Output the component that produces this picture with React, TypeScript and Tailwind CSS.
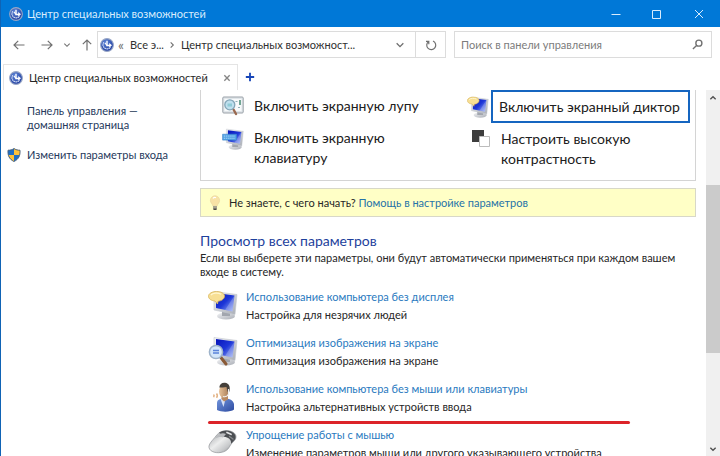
import React from "react";

function EaseOfAccessIcon({ className }: { className: string }) {
  return (
    <svg viewBox="0 0 16 16" className={className} aria-hidden="true">
      <defs>
        <radialGradient id="eoa" cx="40%" cy="30%" r="75%">
          <stop offset="0" stopColor="#5c83d6" />
          <stop offset="1" stopColor="#1f3b9c" />
        </radialGradient>
      </defs>
      <circle cx="8" cy="8" r="7.3" fill="url(#eoa)" stroke="#9aa8c6" strokeWidth="1.2" />
      <path d="M4.200 5A4.700 4.700 0 1 0 12.200 10.200" fill="none" stroke="#e6eefc" strokeWidth="1.300" strokeDasharray="1.600 .7" />
      <path d="M8 3v5.500h3.500" fill="none" stroke="#fff" strokeWidth="1.600" />
      <path d="m10.500 5.800 3.200 2.600-3.200 2.600z" fill="#fff" />
      <path d="M5.600 5.500 8 8.500" stroke="#fff" strokeWidth="1.200" />
    </svg>
  );
}

function Monitor() {
  return (
    <>
      <defs>
        <linearGradient id="screen" x1="0" y1="0" x2="1" y2="1">
          <stop offset="0" stopColor="#0714b8" />
          <stop offset=".5" stopColor="#1d36d8" />
          <stop offset="1" stopColor="#a9bdf6" />
        </linearGradient>
        <linearGradient id="metal" x1="0" y1="0" x2="1" y2="1">
          <stop offset="0" stopColor="#f4f5f7" />
          <stop offset="1" stopColor="#a8acb4" />
        </linearGradient>
      </defs>
      <ellipse cx="18" cy="26" rx="9" ry="3.600" fill="url(#metal)" />
      <path d="m14 20 8 2v4h-8z" fill="#a2a6ae" />
      <path d="M6 1.500 29 4.500 27 24.500 6 20z" fill="url(#metal)" stroke="#c3c7cf" strokeWidth=".6" />
      <path d="M8 3 26.500 5.500 24.500 21.500 8 18z" fill="url(#screen)" />
      <path d="M26.500 5.500 24.500 21.500 17 20z" fill="#fff" opacity=".22" />
    </>
  );
}

function NarratorIcon({ className }: { className: string }) {
  return (
    <svg viewBox="0 0 30 30" className={className} aria-hidden="true">
      <Monitor />
      <path d="M8.500 1.500c4.500 0 8 1.800 8 4.600S13.500 11 10 11.200L9.500 14 7 11C3.200 10.700.5 8.800.5 6.200s3.500-4.700 8-4.700z" fill="#f7df94" stroke="#d9b65c" strokeWidth=".8" />
      <path d="M3 5c1.500-2 7-2.500 10-.8" fill="none" stroke="#fff6d0" strokeWidth="1.300" />
    </svg>
  );
}

function KeyboardIcon({ className }: { className: string }) {
  return (
    <svg viewBox="0 0 30 30" className={className} aria-hidden="true">
      <Monitor />
      <path d="M.8 8.500h19v8H.8z" fill="#54a3e4" stroke="#3b83c9" strokeWidth=".8" />
      <path d="M2.500 11h15.500M2.500 14h15.500" stroke="#b5dcfb" strokeWidth="1.200" strokeDasharray="1.600 1" />
    </svg>
  );
}

function DisplayIcon({ className }: { className: string }) {
  return (
    <svg viewBox="0 0 30 30" className={className} aria-hidden="true">
      <Monitor />
      <path d="m12.500 21 5.500 7" stroke="#8a5a36" strokeWidth="3" strokeLinecap="round" />
      <circle cx="8" cy="16" r="6.600" fill="#d3e6fa" stroke="#9eb3ca" strokeWidth="1.500" />
      <path d="M5 14.500h6M5 17h6" stroke="#5b84da" strokeWidth="1.500" />
    </svg>
  );
}

function MagnifierIcon({ className }: { className: string }) {
  return (
    <svg viewBox="0 0 22 20" className={className} aria-hidden="true">
      <rect x=".8" y="1" width="20.400" height="16" rx="1" fill="#e1e6ea" stroke="#9aa1a8" strokeWidth="1" />
      <rect x="2.500" y="3" width="17" height="12" fill="#f8fafb" />
      <path d="M18 4v5" stroke="#27795c" strokeWidth="1.300" />
      <path d="M13.500 5.500h2M16 11.500h2" stroke="#93b3ba" />
      <path d="m11.500 13.500 2.500 4.500" stroke="#9b6a50" strokeWidth="2.400" strokeLinecap="round" />
      <circle cx="7.800" cy="8.800" r="5" fill="#bfe0ee" stroke="#84a6b8" strokeWidth="1.300" />
      <path d="M5.500 7.500h4.500v3H5.500z" fill="#8fcbd6" />
    </svg>
  );
}

function PersonIcon({ className }: { className: string }) {
  return (
    <svg viewBox="0 0 30 30" className={className} aria-hidden="true">
      <defs>
        <linearGradient id="shirt" x1="0" y1="0" x2="1" y2="1">
          <stop offset="0" stopColor="#7396dd" />
          <stop offset="1" stopColor="#2c4aa0" />
        </linearGradient>
        <linearGradient id="skin" x1="0" y1="0" x2="1" y2="0">
          <stop offset="0" stopColor="#e8c39a" />
          <stop offset="1" stopColor="#a87c56" />
        </linearGradient>
      </defs>
      <path d="M9 28V21c0-3 2.500-4.500 7-4.500s9 1 10 5.500v5.500c-3 2.500-12 3-17 .5z" fill="url(#shirt)" />
      <path d="m12.500 17 3 8 2-8z" fill="#d5dff5" />
      <path d="M13.500 13h6.500v4.500l-4 2-2.500-2.500z" fill="#b98a62" />
      <ellipse cx="16" cy="9.500" rx="5" ry="6.300" fill="url(#skin)" />
      <path d="M11.300 5.500C11.500 2 14 .5 17 .8c4 .4 6 4.200 4 9.700l-1.500-1L18.500 5c-2.500.7-5 .2-7.200.5z" fill="#45403a" />
      <path d="M20.500 7v5c-.5 2-3 3-5.500 2.500" fill="none" stroke="#f1f1f1" strokeWidth="1.100" />
      <path d="M8.500 11.500c1 1.300 1 3 0 4.300M5.500 12.500c.8.800.8 1.800 0 2.600" fill="none" stroke="#e3b385" strokeWidth="1.500" />
    </svg>
  );
}

function MouseIcon({ className }: { className: string }) {
  return (
    <svg viewBox="0 0 30 30" className={className} aria-hidden="true">
      <defs>
        <linearGradient id="mouse" x1="0" y1="0" x2="1" y2="1">
          <stop offset="0" stopColor="#999ca0" />
          <stop offset=".45" stopColor="#eceded" />
          <stop offset=".7" stopColor="#c6c8ca" />
          <stop offset="1" stopColor="#74777b" />
        </linearGradient>
      </defs>
      <path d="M8 8C11 3.500 17 1.800 22 3s7 4.500 5.500 8c-1 2.200-3.500 3.500-5 6-1.500 2.800-3 5.500-7 6.800C9 26 1.800 24 1 19.500.4 16 4.500 12.500 8 8z" fill="url(#mouse)" stroke="#8f9296" strokeWidth=".7" />
      <path d="M11 4.800C15 2 19 2 22.500 3.200c4.500 1.600 6.300 4.800 4.500 8.300l-4 4.300c.5-3-.8-5.300-4-6.300-2-.6-4-.8-5-2z" fill="#4b4e52" />
      <path d="M9 7.500c3-2.300 6-2.600 9-1.600l-3 3.500c-2.500-.8-5-.5-8 1.200z" fill="#b9bbbe" />
      <path d="m19 4.500 4 1.800" stroke="#e3e4e6" strokeWidth="1.700" strokeLinecap="round" />
      <path d="m21.500 8.500 3.500 2.500" stroke="#85888c" strokeWidth="1.400" strokeLinecap="round" />
    </svg>
  );
}

function ContrastIcon() {
  return (
    <svg viewBox="0 0 20 20" className="h-5 w-5" aria-hidden="true">
      <path d="M1 1h12v12H1z" fill="#3d3d3d" />
      <path d="M8.500 7.500h10v10h-10z" fill="#fff" stroke="#bcbcbc" />
    </svg>
  );
}

function ShieldIcon() {
  return (
    <svg viewBox="0 0 14 14" className="h-[14px] w-[14px]" aria-hidden="true">
      <path d="M7 .5C5.200 1.800 3 2.300 1 2.200c-.4 5.300 1.200 9 6 11.300 4.800-2.300 6.400-6 6-11.300-2 .1-4.200-.4-6-1.700z" fill="#1e6fc4" />
      <path d="M7 .5c1.800 1.300 4 1.800 6 1.700.1 1.700 0 3.300-.5 4.800H7zM1.500 7H7v6.500C4.200 12.200 2.300 9.800 1.500 7z" fill="#fcc23a" />
      <path d="M7 .5C5.200 1.800 3 2.300 1 2.200c-.4 5.300 1.200 9 6 11.300 4.800-2.300 6.400-6 6-11.300-2 .1-4.200-.4-6-1.700z" fill="none" stroke="#4c6078" strokeWidth=".9" />
    </svg>
  );
}

function BulbIcon() {
  return (
    <svg viewBox="0 0 12 16" className="h-4 w-3" aria-hidden="true">
      <path d="M6 .8a4.600 4.600 0 0 0-4.600 4.600c0 2.400 2 3.300 2.400 5.400h4.400c.4-2.100 2.400-3 2.400-5.400A4.600 4.600 0 0 0 6 .8z" fill="#f8e2a6" stroke="#ead7a0" strokeWidth=".7" />
      <path d="M4 3.500c.7-1 2-1.300 3-.8" fill="none" stroke="#fff" strokeWidth="1.200" />
      <path d="M4 11h4v2.500L7 15H5l-1-1.500z" fill="#a8a390" />
      <path d="M4.500 13.500h3V15h-3z" fill="#4d4a45" />
    </svg>
  );
}

function Stroke({ d, className, width = 1.2 }: { d: string; className: string; width?: number }) {
  return (
    <svg viewBox="0 0 12 12" className={className} fill="none" stroke="currentColor" strokeWidth={width} aria-hidden="true">
      <path d={d} />
    </svg>
  );
}

const LEFT = "M11.500 6H1M5.200 1.800 1 6l4.200 4.200";
const RIGHT = "M.5 6H11M6.800 1.800 11 6l-4.200 4.200";
const UP = "M6 11.500V1M1.800 5.200 6 1l4.200 4.200";
const DOWN_CHEVRON = "m2 4 4 4 4-4";
const UP_CHEVRON = "m2 8 4-4 4 4";
const RIGHT_CHEVRON = "m4 2 4 4-4 4";

const settings = [
  { title: "Использование компьютера без дисплея", text: "Настройка для незрячих людей", Icon: NarratorIcon },
  { title: "Оптимизация изображения на экране", text: "Оптимизация изображения на экране", Icon: DisplayIcon },
  { title: "Использование компьютера без мыши или клавиатуры", text: "Настройка альтернативных устройств ввода", Icon: PersonIcon, marked: true },
  { title: "Упрощение работы с мышью", text: "Изменение параметров мыши или другого указывающего устройства", Icon: MouseIcon },
];

export default function App() {
  return (
    <div className="flex h-screen flex-col overflow-hidden border-l border-[#0f63b5] bg-white font-['Lato','Open_Sans',sans-serif] text-[11px] leading-[14px] text-[#262626]">
      <header className="flex h-[27px] shrink-0 items-center bg-[#0078d7] pl-2 text-[#d9ecfc]">
        <EaseOfAccessIcon className="h-[14px] w-[14px]" />
        <h1 className="ml-1 flex-1">Центр специальных возможностей</h1>
        <button aria-label="Свернуть" className="flex h-full w-[41px] items-center justify-center"><Stroke d="M1.500 6.500h9" className="h-3 w-3" width={1} /></button>
        <button aria-label="Развернуть" className="flex h-full w-[41px] items-center justify-center"><Stroke d="M1.500 2.500h8v8h-8z" className="h-3 w-3" width={1} /></button>
        <button aria-label="Закрыть" className="flex h-full w-[43px] items-center justify-center"><Stroke d="m2 2 8 8M10 2l-8 8" className="h-3 w-3" width={1} /></button>
      </header>

      <nav aria-label="Навигация" className="mt-1 flex h-[27px] shrink-0 items-stretch pr-2 text-[#707070]">
        <div className="flex w-24 items-center pl-3">
          <button aria-label="Назад"><Stroke d={LEFT} className="h-3 w-3" /></button>
          <button aria-label="Вперёд" className="ml-4"><Stroke d={RIGHT} className="h-3 w-3" /></button>
          <button aria-label="Последние" className="ml-2.5"><Stroke d={DOWN_CHEVRON} className="h-2 w-2" width={1.6} /></button>
          <button aria-label="Вверх" className="ml-2.5"><Stroke d={UP} className="h-3 w-3" /></button>
        </div>
        <div className="flex flex-1 items-center border border-[#dcdcdc] pl-0.5">
          <EaseOfAccessIcon className="h-[14px] w-[14px]" />
          <span className="ml-1 text-[14px]">«</span>
          <button className="ml-1.5 text-[#303030]">Все э...</button>
          <Stroke d={RIGHT_CHEVRON} className="ml-1 h-2 w-2" width={1.6} />
          <button className="ml-1 flex-1 truncate pl-px text-left text-[#303030]">Центр специальных возможност...</button>
          <button aria-label="Журнал адресов" className="px-2.5"><Stroke d={DOWN_CHEVRON} className="h-[10px] w-[10px]" width={1.6} /></button>
          <button aria-label="Обновить" className="flex w-[30px] items-center justify-center self-stretch border-l border-[#dcdcdc]">
            <Stroke d="M3.600 2.500A4.500 4.500 0 1 0 8 2M1 2.400h2.800v2.800" className="h-3 w-3" />
          </button>
        </div>
        <label className="ml-2 flex w-[258px] items-center border border-[#dcdcdc] pr-2 pl-1.5">
          <input aria-label="Поиск" placeholder="Поиск в панели управления" className="min-w-0 flex-1 outline-none placeholder:text-[#7c7c7c]" />
          <svg viewBox="0 0 12 12" className="h-[11px] w-[11px]" fill="none" stroke="currentColor" strokeWidth="1.500" aria-hidden="true">
            <circle cx="7.500" cy="4.500" r="3.300" />
            <path d="M5 7 1 11" />
          </svg>
        </label>
      </nav>

      <div role="tablist" className="mt-1.5 flex h-[26px] shrink-0 items-stretch pl-0.5">
        <div className="flex w-[235px] items-center border border-b-0 border-[#e4e4e4] pr-1 pl-[5px]">
          <button role="tab" aria-selected="true" className="flex flex-1 items-center gap-1.5 whitespace-nowrap">
            <EaseOfAccessIcon className="h-[14px] w-[14px]" />
            Центр специальных возможностей
          </button>
          <button aria-label="Закрыть вкладку" className="px-0.5 text-[#858585]"><Stroke d="m2 2 8 8M10 2l-8 8" className="h-2 w-2" width={2} /></button>
        </div>
        <button aria-label="Новая вкладка" className="ml-[7px] text-[#1746b8]"><Stroke d="M6 1v10M1 6h10" className="h-[10px] w-[10px]" width={2.2} /></button>
      </div>

      <div className="flex min-h-0 flex-1">
        <aside className="w-[199px] shrink-0 pt-[14px] text-[#26395c]">
          <a href="#home" className="ml-[26px] block">Панель управления —<br />домашняя страница</a>
          <a href="#signin" className="mt-4 ml-1.5 flex items-center gap-1.5 whitespace-nowrap"><ShieldIcon />Изменить параметры входа</a>
        </aside>

        <main className="min-w-0 flex-1 overflow-hidden pr-[10px]">
          <section aria-label="Быстрый доступ" className="grid h-[91px] grid-cols-[266px_1fr] border border-t-0 border-[#d4d4d4] text-[14px] leading-5 text-[#202020]">
            <ul className="pt-1.5">
              <li className="flex gap-2.5 pl-[21px]"><MagnifierIcon className="h-5 w-[22px]" /><a href="#magnifier">Включить экранную лупу</a></li>
              <li className="mt-3 flex gap-2.5 pl-[21px]"><KeyboardIcon className="h-[22px] w-[22px]" /><a href="#keyboard" className="w-40">Включить экранную клавиатуру</a></li>
            </ul>
            <ul>
              <li className="flex items-center gap-0.5"><NarratorIcon className="h-[22px] w-[22px]" /><a href="#narrator" className="flex h-[33px] w-[199px] items-center border-2 border-[#1565c0] pl-1.5 whitespace-nowrap">Включить экранный диктор</a></li>
              <li className="mt-1.5 flex gap-2.5 pl-1"><ContrastIcon /><a href="#contrast" className="w-40">Настроить высокую контрастность</a></li>
            </ul>
          </section>

          <p className="mt-[7px] flex h-[29px] items-center border border-[#d8d8c8] bg-[#ffffc6] pl-2">
            <BulbIcon />
            <span className="ml-2">Не знаете, с чего начать? <a href="#help" className="text-[#2673a8]">Помощь в настройке параметров</a></span>
          </p>

          <section className="mt-3.5">
            <h2 className="text-[14px] leading-5 text-[#1d419c]">Просмотр всех параметров</h2>
            <p>Если вы выберете эти параметры, они будут автоматически применяться при каждом вашем входе в систему.</p>
            <ul className="mt-[11px]">
              {settings.map(({ title, text, Icon, marked }) => (
                <li key={title} className="relative flex h-[46px] pl-2">
                  <Icon className="h-[30px] w-[30px] shrink-0" />
                  <div className="ml-2 whitespace-nowrap">
                    <a href="#setting" className="block text-[#2a7ac0]">{title}</a>
                    <p className="mt-1">{text}</p>
                  </div>
                  {marked && <span className="absolute top-[39px] left-2 h-[3px] w-[422px] rounded-full bg-[#dc2329]" />}
                </li>
              ))}
            </ul>
          </section>
        </main>

        <div aria-label="Прокрутка" className="flex w-[14px] shrink-0 flex-col bg-[#f0f0f0] text-[#505050]">
          <button aria-label="Вверх" className="flex h-[15px] items-center justify-center"><Stroke d={UP_CHEVRON} className="h-2 w-2" width={2} /></button>
          <div className="flex-[80]" />
          <div className="flex-[168] bg-[#cbcbcb]" />
          <div className="flex-[88]" />
          <button aria-label="Вниз" className="flex h-[15px] items-center justify-center"><Stroke d={DOWN_CHEVRON} className="h-2 w-2" width={2} /></button>
        </div>
      </div>
    </div>
  );
}
